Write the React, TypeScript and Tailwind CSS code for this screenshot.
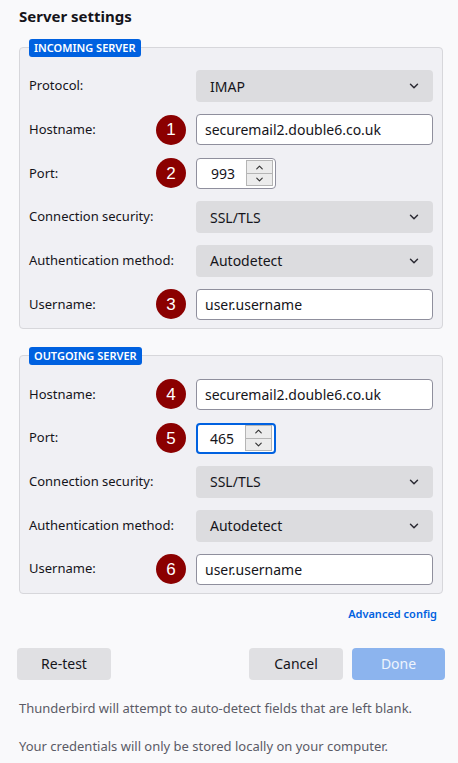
import { ChevronDown, ChevronUp } from 'lucide-react'

const FONT = { fontFamily: '"Noto Sans", "Open Sans", sans-serif' }

function Badge({ n }: { n: number }) {
  return (
    <div className="w-[30px] h-[30px] rounded-full bg-[#8b0000] text-white flex items-center justify-center text-[17px] leading-none" style={{ fontFamily: '"Liberation Sans", Arial, sans-serif' }}>
      {n}
    </div>
  )
}

function Select({ value }: { value: string }) {
  return (
    <div className="h-[32px] w-full rounded-[4px] bg-[#dcdcdf] flex items-center justify-between pl-[14px] pr-[12px] text-[14px] text-[#15141a]">
      <span>{value}</span>
      <ChevronDown size={14} strokeWidth={2.5} className="text-[#2b2a33]" />
    </div>
  )
}

function TextInput({ value }: { value: string }) {
  return (
    <div className="h-[31px] w-full rounded-[4px] bg-white border border-[#8f8f9d] flex items-center px-[8px] text-[14px] text-[#15141a]">
      {value}
    </div>
  )
}

function PortInput({ value, focused }: { value: string; focused?: boolean }) {
  return (
    <div className={`h-[31px] w-[80px] rounded-[4px] bg-white flex items-center pr-[2px] text-[14px] text-[#15141a] ${
      focused ? 'border-2 border-[#0061e0]' : 'border border-[#8f8f9d]'
    }`}>
      <span className="flex-1 text-right pr-[11px]">{value}</span>
      <div className="flex flex-col w-[27px] h-[26px] border border-[#b5b5b5]">
        <div className="flex-1 bg-[#ececec] flex items-center justify-center border-b border-[#b5b5b5]">
          <ChevronUp size={11} strokeWidth={2.5} className="text-[#333]" />
        </div>
        <div className="flex-1 bg-[#ececec] flex items-center justify-center">
          <ChevronDown size={11} strokeWidth={2.5} className="text-[#333]" />
        </div>
      </div>
    </div>
  )
}

type Row = { label: string; badge?: number; control: React.ReactNode }

function Group({ title, rows }: { title: string; rows: Row[] }) {
  return (
    <div className="relative mx-[2px] border border-[#d7d7db] rounded-[4px] bg-[#f0f0f4] pt-[22px] pb-[8px] px-[9px]">
      <div className="absolute -top-[9px] left-[9px] h-[18px] px-[5px] rounded-[3px] bg-[#0061e0] text-white text-[11px] font-semibold flex items-center">
        {title}
      </div>
      <div className="flex flex-col gap-[11.7px]">
        {rows.map((r) => (
          <div key={r.label} className="flex items-center h-[32px]">
            <div className="w-[127px] whitespace-nowrap text-[13px] text-[#15141a]">{r.label}</div>
            <div className="w-[30px] flex justify-center">{r.badge ? <Badge n={r.badge} /> : null}</div>
            <div className="w-[10px]" />
            <div className="flex-1">{r.control}</div>
          </div>
        ))}
      </div>
    </div>
  )
}

export default function App() {
  return (
    <div className="min-h-[763px] w-[458px] bg-[#f9f9fb] pl-[17px] pr-[13px] pt-[5px]" style={FONT}>
      <h1 className="ml-[2px] text-[15px] font-bold text-[#15141a] leading-[22px]">Server settings</h1>

      <div className="mt-[20px]">
        <Group
          title="INCOMING SERVER"
          rows={[
            { label: 'Protocol:', control: <Select value="IMAP" /> },
            { label: 'Hostname:', badge: 1, control: <TextInput value="securemail2.double6.co.uk" /> },
            { label: 'Port:', badge: 2, control: <PortInput value="993" /> },
            { label: 'Connection security:', control: <Select value="SSL/TLS" /> },
            { label: 'Authentication method:', control: <Select value="Autodetect" /> },
            { label: 'Username:', badge: 3, control: <TextInput value="user.username" /> },
          ]}
        />
      </div>

      <div className="mt-[26px]">
        <Group
          title="OUTGOING SERVER"
          rows={[
            { label: 'Hostname:', badge: 4, control: <TextInput value="securemail2.double6.co.uk" /> },
            { label: 'Port:', badge: 5, control: <PortInput value="465" focused /> },
            { label: 'Connection security:', control: <Select value="SSL/TLS" /> },
            { label: 'Authentication method:', control: <Select value="Autodetect" /> },
            { label: 'Username:', badge: 6, control: <TextInput value="user.username" /> },
          ]}
        />
      </div>

      <div className="flex justify-end pr-[8px] mt-[12px]">
        <span className="text-[11px] font-semibold text-[#0061e0]">Advanced config</span>
      </div>

      <div className="flex items-center mt-[25px]">
        <button className="h-[32px] w-[94px] rounded-[4px] bg-[#e0e0e3] text-[14px] text-[#15141a]">Re-test</button>
        <div className="flex-1" />
        <button className="h-[32px] w-[94px] rounded-[4px] bg-[#e0e0e3] text-[14px] text-[#15141a]">Cancel</button>
        <button className="ml-[9px] h-[32px] w-[93px] rounded-[4px] bg-[#8cb4ee] text-[14px] text-[#eef4fd]">Done</button>
      </div>

      <p className="ml-[2px] mt-[19px] text-[13px] text-[#5b5b66]">Thunderbird will attempt to auto-detect fields that are left blank.</p>
      <p className="ml-[2px] mt-[19px] text-[13px] text-[#5b5b66]">Your credentials will only be stored locally on your computer.</p>
    </div>
  )
}
